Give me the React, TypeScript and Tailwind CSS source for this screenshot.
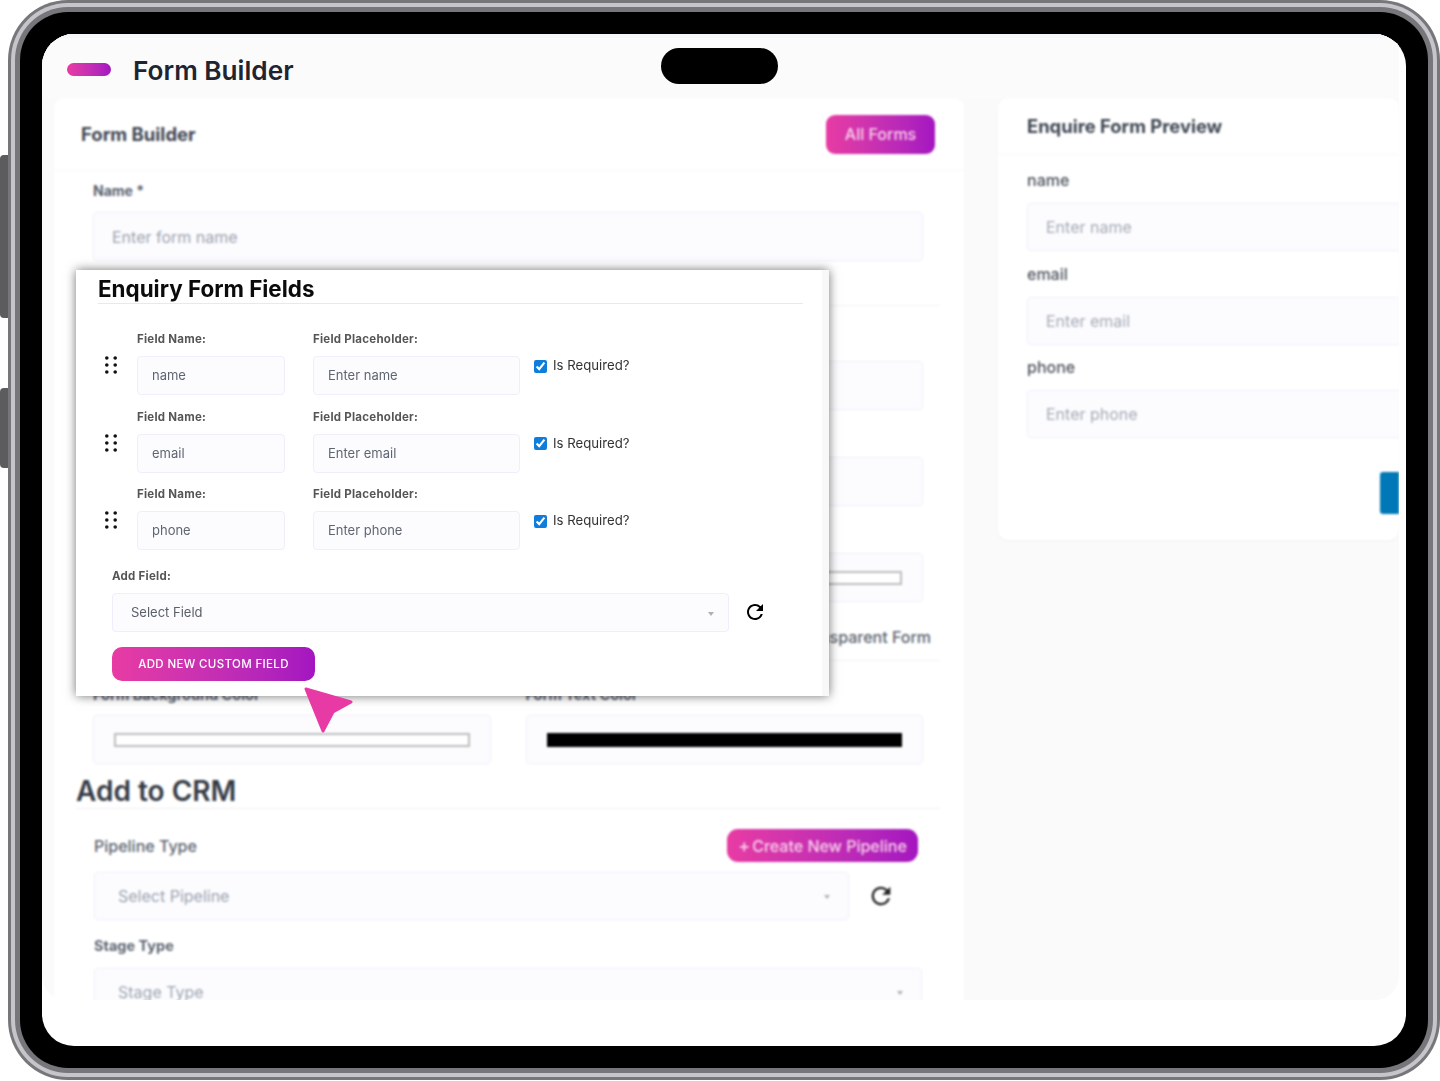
import { MdRefresh } from "react-icons/md";

const FIELDS = [
    { name: "name", placeholder: "Enter name" },
    { name: "email", placeholder: "Enter email" },
    { name: "phone", placeholder: "Enter phone" },
];

const inputBox = "rounded-[4px] border border-[#eeeefd] bg-[#fcfcff]";
const gradient = "bg-gradient-to-r from-[#e83ba3] to-[#a415c0]";
const modalLabel = "h-[18px] text-[11.5px] font-bold leading-[18px] tracking-[0.25px] text-[#555]";

function Caret({ className }: { className: string }) {
    return <span className={`border-x-[3.5px] border-t-[4px] border-x-transparent border-t-[#b0b0b4] ${className}`} />;
}

function DragDots() {
    return (
        <svg width="12" height="18" viewBox="0 0 12 18" className="fill-[#111]">
            <circle cx="1.8" cy="2" r="1.8" />
            <circle cx="10.2" cy="2" r="1.8" />
            <circle cx="1.8" cy="9" r="1.8" />
            <circle cx="10.2" cy="9" r="1.8" />
            <circle cx="1.8" cy="16" r="1.8" />
            <circle cx="10.2" cy="16" r="1.8" />
        </svg>
    );
}

function FieldRow({ name, placeholder }: { name: string; placeholder: string }) {
    return (
        <div className="flex h-[77.5px]">
            <div className="w-[32px] shrink-0 pt-[26px]">
                <DragDots />
            </div>
            <div className="w-[148px] shrink-0">
                <div className={modalLabel}>Field Name:</div>
                <div className={`mt-[8px] flex h-[39px] items-center pl-[14px] pt-[1px] text-[13px] text-[#5f6672] ${inputBox}`}>{name}</div>
            </div>
            <div className="ml-[28px] w-[207px] shrink-0">
                <div className={modalLabel}>Field Placeholder:</div>
                <div className={`mt-[8px] flex h-[39px] items-center pl-[14px] pt-[1px] text-[13px] text-[#5f6672] ${inputBox}`}>{placeholder}</div>
            </div>
            <label className="ml-[14px] mt-[27px] flex h-[18px] items-center gap-[6px] text-[13.2px] text-[#333]">
                <input type="checkbox" defaultChecked className="m-0 h-[13px] w-[13px] accent-[#0f7ddb]" />
                Is Required?
            </label>
        </div>
    );
}

function EnquiryModal() {
    return (
        <div className="absolute left-[34px] top-[236px] flex h-[426px] w-[753px] bg-white shadow-[0_0_10px_rgba(0,0,0,0.55)]">
            <div className="w-[746px] pl-[22px] pr-[19px]">
                <h2 className="h-[34px] border-b border-[#e9e9e9] text-[22.4px] font-bold leading-[37px] text-[#0b0b0b]">Enquiry Form Fields</h2>
                <div className="pl-[7px] pt-[26px]">
                    {FIELDS.map((field) => (
                        <FieldRow key={field.name} {...field} />
                    ))}
                </div>
                <div className="pl-[14px] pt-[4px]">
                    <div className={modalLabel}>Add Field:</div>
                    <div className="mt-[8px] flex items-center">
                        <div className={`flex h-[39px] w-[617px] items-center justify-between pl-[18px] pr-[14px] pt-[2px] text-[13px] text-[#5a5f68] ${inputBox}`}>
                            Select Field
                            <Caret className="mt-[2px]" />
                        </div>
                        <MdRefresh className="ml-[14px] text-[24px] text-black" />
                    </div>
                    <button className={`mt-[15px] block h-[34px] w-[203px] rounded-[10px] pt-[2px] text-[11.5px] font-medium uppercase tracking-[0.35px] text-white ${gradient}`}>
                        Add New Custom Field
                    </button>
                </div>
            </div>
            <div className="w-[7px] bg-[#f8f8f8]" />
        </div>
    );
}

function Cursor() {
    return (
        <svg width="56" height="54" viewBox="0 0 56 54" className="absolute left-[259px] top-[650px]">
            <path d="M5 5 L50 18 L32 28 L22 47 Z" fill="#e83aa5" stroke="#e83aa5" strokeWidth="3" strokeLinejoin="round" />
        </svg>
    );
}

function BarInput({ bar }: { bar: string }) {
    return (
        <div className={`flex h-[49px] items-center px-[20px] ${inputBox}`}>
            <div className={`h-[14px] w-full ${bar}`} />
        </div>
    );
}

function BuilderCard() {
    return (
        <div className="h-[960px] w-[910px] shrink-0 rounded-t-[10px] bg-white">
            <div className="flex h-[73px] items-center justify-between border-b border-[#f8f8f8] pl-[27px] pr-[29px]">
                <h3 className="mt-[2px] text-[18.5px] font-bold text-[#3f4753]">Form Builder</h3>
                <button className={`h-[39px] w-[109px] rounded-[9px] text-[16px] font-medium text-[#f7cdea] ${gradient}`}>All Forms</button>
            </div>
            <div className="pl-[22px] pr-[24px]">
                <div className="border-b border-[#f4f4f4] px-[17px] pb-[44px] pt-[12px]">
                    <div className="h-[16px] text-[14px] font-bold leading-[16px] text-[#5b6370]">Name *</div>
                    <div className={`mt-[13px] flex h-[49px] items-center pl-[18px] text-[16px] text-[#9ca3af] ${inputBox}`}>Enter form name</div>
                </div>
                <div className="border-b border-[#f4f4f4] px-[17px] pb-[11px] pt-[55px]">
                    <div className={`h-[49px] ${inputBox}`} />
                    <div className={`mt-[47px] h-[49px] ${inputBox}`} />
                    <div className="mt-[47px] grid grid-cols-2 gap-[35px]">
                        <BarInput bar="border-2 border-[#bdbdbd] bg-white" />
                        <BarInput bar="border-2 border-[#bdbdbd] bg-white" />
                    </div>
                    <div className="-mr-2 mt-[23px] h-[24px] text-right text-[16px] font-medium leading-[24px] text-[#5b6370]">Transparent Form</div>
                </div>
                <div className="px-[17px] pt-[26px]">
                    <div className="grid grid-cols-2 gap-[35px]">
                        <div className="h-[16px] text-[14.5px] font-bold leading-[16px] text-[#5b6370]">Form Background Color</div>
                        <div className="h-[16px] text-[14.5px] font-bold leading-[16px] text-[#5b6370]">Form Text Color</div>
                    </div>
                    <div className="mt-[12px] grid grid-cols-2 gap-[35px]">
                        <BarInput bar="border-2 border-[#bdbdbd] bg-white" />
                        <BarInput bar="bg-black" />
                    </div>
                </div>
                <h2 className="mt-[9px] h-[36px] border-b border-[#efefef] text-[28px] font-semibold leading-[36px] text-[#333a45]">Add to CRM</h2>
                <div className="px-[18px] pt-[20px]">
                    <div className="flex h-[33px] items-center justify-between pr-[4px]">
                        <span className="text-[16px] font-medium text-[#5b6370]">Pipeline Type</span>
                        <button className={`h-[33px] w-[191px] rounded-[11px] text-[16px] font-medium text-[#f7cdea] ${gradient}`}>
                            <span className="mr-[2px] text-[18px] leading-none">+</span>Create New Pipeline
                        </button>
                    </div>
                    <div className="mt-[10px] flex items-center">
                        <div className={`flex h-[48px] w-[755px] items-center justify-between pl-[23px] pr-[18px] text-[16px] text-[#9ca3af] ${inputBox}`}>
                            Select Pipeline
                            <Caret className="mt-[2px]" />
                        </div>
                        <MdRefresh className="ml-[18px] text-[28px] text-[#222]" />
                    </div>
                    <div className="mt-[18px] h-[16px] text-[14.5px] font-bold leading-[16px] text-[#5b6370]">Stage Type</div>
                    <div className={`mt-[14px] flex h-[48px] w-[828px] items-center justify-between pl-[23px] pr-[18px] text-[16px] text-[#9ca3af] ${inputBox}`}>
                        Stage Type
                        <Caret className="mt-[2px]" />
                    </div>
                </div>
            </div>
        </div>
    );
}

function PreviewCard() {
    return (
        <div className="ml-[34px] h-[442px] flex-1 overflow-hidden rounded-[10px] bg-white shadow-[0_1px_3px_rgba(0,0,0,0.04)]">
            <div className="flex h-[57px] items-center border-b border-[#f7f7f7] pl-[29px] pt-[2px] text-[18.4px] font-bold text-[#3f4753]">Enquire Form Preview</div>
            <div className="w-[460px] pl-[29px] pt-[15px]">
                {FIELDS.map((field) => (
                    <div key={field.name} className="h-[93.7px]">
                        <div className="h-[20px] text-[16px] font-medium leading-[20px] text-[#4c525c]">{field.name}</div>
                        <div className={`mt-[13px] flex h-[48px] items-center pl-[18px] text-[16px] text-[#a4aab4] ${inputBox}`}>{field.placeholder}</div>
                    </div>
                ))}
                <div className="ml-[353px] mt-[21px] h-[42px] w-[80px] rounded-[3px] bg-[#0077b6]" />
            </div>
        </div>
    );
}

export default function App() {
    return (
        <div className="h-[1081px] w-[1440px] overflow-hidden bg-white pl-2 font-['Inter',sans-serif]">
            <div className="relative h-[1080px] w-[1432px] rounded-[60px] bg-[#77777b] p-[3px]">
                {/* side buttons */}
                <div className="absolute -left-2 top-[155px] h-[163px] w-[8px] rounded-l-[4px] bg-[#5c5c5f]" />
                <div className="absolute -left-2 top-[388px] h-[80px] w-[8px] rounded-l-[4px] bg-[#5c5c5f]" />
                <div className="h-full rounded-[57px] bg-[#c6c6ca] p-[4px]">
                    <div className="h-full rounded-[53px] bg-[#77777b] p-[5px]">
                        <div className="h-full rounded-[48px] bg-black p-[22px]">
                            <div className="relative h-full overflow-hidden rounded-[32px] bg-white">
                                <div className="h-[966px] w-[1357px] overflow-hidden rounded-b-[24px] bg-[#fafafb]">
                                    <div className="flex h-[64px] items-center border-t-[4px] border-[#f4f8fc] bg-[#fbfbfc]">
                                        <div className={`ml-[25px] mt-[3px] h-[13px] w-[44px] rounded-full ${gradient}`} />
                                        <h1 className="ml-[22px] mt-[6px] text-[26.2px] font-semibold text-[#1f2430]">Form Builder</h1>
                                    </div>
                                    <div className="flex h-[902px] pl-[12px] blur-[1px]">
                                        <BuilderCard />
                                        <PreviewCard />
                                    </div>
                                </div>
                                <EnquiryModal />
                                <Cursor />
                                <div className="absolute left-[619px] top-[14px] h-[36px] w-[117px] rounded-full bg-black" />
                            </div>
                        </div>
                    </div>
                </div>
            </div>
        </div>
    );
}
